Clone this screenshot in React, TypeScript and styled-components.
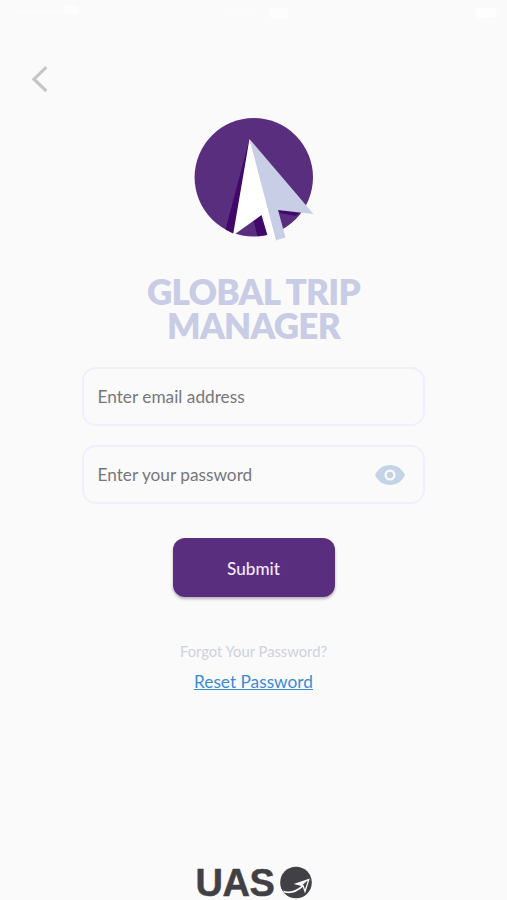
import React from "react";
import styled, { createGlobalStyle } from "styled-components";

const GlobalStyle = createGlobalStyle`
  * { box-sizing: border-box; }
  body { margin: 0; background: #fafafb; font-family: Lato, sans-serif; }
`;

const Screen = styled.main`
  width: 507px;
  height: 900px;
  overflow: hidden;
  background: #fafafb;
  display: flex;
  flex-direction: column;
  align-items: center;
`;

const StatusBar = styled.header`
  width: 100%;
  height: 26px;
  flex: none;
`;

const NavBar = styled.nav`
  width: 100%;
  height: 82px;
  flex: none;
  padding: 39px 0 0 30px;
`;

const BackButton = styled.button`
  display: block;
  width: 20px;
  height: 28px;
  padding: 0;
  border: 0;
  background: none;
`;

const Emblem = styled.svg`
  display: block;
  flex: none;
  width: 140px;
  height: 142px;
`;

const Title = styled.h1`
  margin: 24px 0 0;
  height: 68px;
  flex: none;
  color: #c8cce5;
  font-size: 35px;
  font-weight: 800;
  letter-spacing: -0.75px;
  line-height: 34px;
  text-align: center;
`;

const TitleLine = styled.span`
  display: block;
`;

const Form = styled.form`
  width: 343px;
  margin-top: 25px;
  display: flex;
  flex-direction: column;
  align-items: center;
  gap: 19px;
`;

const Field = styled.label`
  width: 100%;
  height: 59px;
  display: flex;
  align-items: center;
  padding: 0 17px 0 13.5px;
  border: 2px solid #f0f0fb;
  border-radius: 14px;
`;

const Input = styled.input`
  flex: 1;
  min-width: 0;
  padding: 0;
  border: 0;
  outline: 0;
  background: none;
  font: 400 17.25px/24px Lato, sans-serif;
  color: #77777a;
  &::placeholder { color: #77777a; opacity: 1; }
`;

const EyeIcon = styled.svg`
  display: block;
  width: 32px;
  height: 22px;
  flex: none;
`;

const SubmitButton = styled.button`
  width: 162px;
  height: 59px;
  margin-top: 15px;
  padding: 2px 0 0;
  border: 0;
  border-radius: 12px;
  background: #5a2e7f;
  box-shadow: 0 2px 3px rgba(40, 30, 55, 0.32);
  color: #f6e9ff;
  font: 500 17.1px/24px Lato, sans-serif;
`;

const Help = styled.section`
  margin-top: 43px;
  display: flex;
  flex-direction: column;
  align-items: center;
  gap: 8px;
`;

const Prompt = styled.p`
  margin: 0;
  color: #cfd1df;
  font-size: 14.75px;
  line-height: 22px;
`;

const ResetLink = styled.a`
  color: #3a8cd4;
  font-size: 17.25px;
  line-height: 24px;
  text-decoration: underline;
`;

const Brand = styled.footer`
  margin-top: auto;
  height: 35px;
  flex: none;
  display: flex;
  align-items: flex-start;
  gap: 4px;
`;

const BrandName = styled.span`
  color: #414044;
  font: 700 38px/36px "Liberation Sans", sans-serif;
  letter-spacing: -0.4px;
  -webkit-text-stroke: 0.5px #414044;
`;

const BrandMark = styled.svg`
  display: block;
  width: 33px;
  height: 34px;
`;

export default function App() {
  return (
    <>
      <GlobalStyle />
      <Screen>
        <StatusBar>
          <svg width="507" height="26" fill="#fff">
            <rect x="16" y="9" width="48" height="5" rx="2" opacity=".2" />
            <rect x="64" y="5" width="15" height="9" rx="4" opacity=".6" />
            <rect x="226" y="11" width="31" height="4" rx="2" opacity=".2" />
            <rect x="270" y="8" width="18" height="10" rx="4" opacity=".6" />
            <rect x="475" y="8" width="22" height="10" rx="5" opacity=".7" />
          </svg>
        </StatusBar>
        <NavBar>
          <BackButton aria-label="Back">
            <svg width="20" height="28" viewBox="0 0 20 28" fill="none" stroke="#c6c6c9" strokeWidth="3.2">
              <path d="M16.3 2.200 4 14.200 16.300 26" />
            </svg>
          </BackButton>
        </NavBar>
        <Emblem viewBox="0 0 140 142" aria-label="Global Trip Manager">
          <circle cx="69.8" cy="69.3" r="59.2" fill="#5a2e7f" />
          <path d="M65.5 31 41.5 121.5 49 125.5ZM77.5 107 69.5 112.5 73.5 128.3 83 127ZM94 102 116 105 111.5 108 96 105Z" fill="#3f0869" />
          <path d="M65.5 31 129.5 106 94 102 101.5 129.5 91 132.5 78 90Z" fill="#c7cee6" />
          <path d="M65.5 31 49 127.5 77.5 107 84.5 130.5 92 132.3Z" fill="#fff" />
        </Emblem>
        <Title>
          <TitleLine>GLOBAL TRIP</TitleLine>
          <TitleLine>MANAGER</TitleLine>
        </Title>
        <Form onSubmit={(e) => e.preventDefault()}>
          <Field>
            <Input type="email" placeholder="Enter email address" />
          </Field>
          <Field>
            <Input type="password" placeholder="Enter your password" />
            <EyeIcon viewBox="0 0 32 22">
              <path d="M1 11C4 4.500 9.500 1 16 1s12 3.500 15 10c-3 6.500-8.500 10-15 10S4 17.500 1 11Z" fill="#c5d3e7" />
              <circle cx="16" cy="11" r="4.400" fill="#c5d3e7" stroke="#fafafb" strokeWidth="2.300" />
            </EyeIcon>
          </Field>
          <SubmitButton type="submit">Submit</SubmitButton>
        </Form>
        <Help>
          <Prompt>Forgot Your Password?</Prompt>
          <ResetLink href="#">Reset Password</ResetLink>
        </Help>
        <Brand>
          <BrandName>UAS</BrandName>
          <BrandMark viewBox="0 0 33 34">
            <circle cx="17" cy="17.500" r="15.800" fill="#414044" />
            <path d="M4 25.500C11 28 18 25.500 24.500 19L25.500 20C19 27.500 11 29.500 5 27.500Z" fill="#fafafb" />
            <path d="M17 18.800 29.800 14.500 26 26.500 24 20.500Z" fill="#414044" stroke="#fafafb" strokeWidth="1.300" />
            <path d="M17 18.800 29.800 14.500 22.500 20.800Z" fill="#fafafb" />
          </BrandMark>
        </Brand>
      </Screen>
    </>
  );
}
